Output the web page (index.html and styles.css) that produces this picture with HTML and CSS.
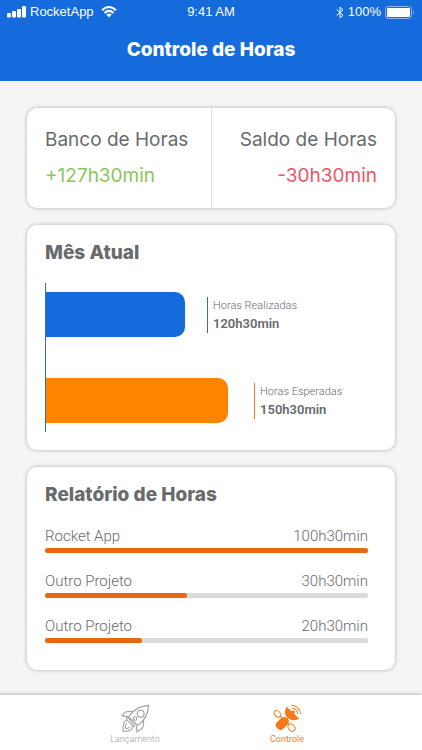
FILE: index.html
```html
<!DOCTYPE html>
<html lang="pt-BR">
<head>
<meta charset="utf-8">
<meta name="viewport" content="width=device-width, initial-scale=1">
<title>Controle de Horas</title>
<link rel="stylesheet" href="styles.css">
</head>
<body>
<div class="app">
  <header class="header">
    <div class="status">
      <div class="status-group">
        <svg class="signal" viewBox="0 0 19 12" aria-hidden="true"><rect x="0" y="7" width="4" height="4.500" rx="1"/><rect x="5" y="5" width="4" height="6.500" rx="1"/><rect x="10" y="3" width="4" height="8.500" rx="1"/><rect x="15" y="0" width="4" height="11.500" rx="1"/></svg>
        <span>RocketApp</span>
        <svg class="wifi" viewBox="0 0 16 12" aria-hidden="true"><path d="M1 4.300Q8-2.300 15 4.300M3.500 7Q8 2.800 12.500 7"/><path class="solid" d="M5.300 8.600Q8 6.200 10.700 8.600L8 11.400Z"/></svg>
      </div>
      <span>9:41 AM</span>
      <div class="status-group status-end">
        <svg class="bluetooth" viewBox="0 0 8 13" aria-hidden="true"><path d="M.7 3.500 7 9.300 4 12V1l3 2.700L.7 9.500"/></svg>
        <span>100%</span>
        <svg class="battery" viewBox="0 0 30 13" aria-hidden="true"><rect class="shell" x=".5" y=".5" width="26" height="12" rx="3"/><rect x="2" y="2" width="23" height="9" rx="1"/><path class="tip" d="M28 4.500Q30 6.500 28 8.500Z"/></svg>
      </div>
    </div>
    <h1 class="page-title">Controle de Horas</h1>
  </header>

  <main class="content">
    <section class="card summary">
      <div class="balance">
        <h2 class="balance-label">Banco de Horas</h2>
        <p class="balance-value positive">+127h30min</p>
      </div>
      <div class="balance balance-right">
        <h2 class="balance-label">Saldo de Horas</h2>
        <p class="balance-value negative">-30h30min</p>
      </div>
    </section>

    <section class="card month">
      <h2 class="card-title">Mês Atual</h2>
      <div class="chart">
        <div class="chart-row">
          <div class="bar bar-done"></div>
          <div class="legend legend-done"><span>Horas Realizadas</span><strong>120h30min</strong></div>
        </div>
        <div class="chart-row">
          <div class="bar bar-expected"></div>
          <div class="legend legend-expected"><span>Horas Esperadas</span><strong>150h30min</strong></div>
        </div>
      </div>
    </section>

    <section class="card report">
      <h2 class="card-title">Relatório de Horas</h2>
      <ul class="projects">
        <li><div class="project-text"><span>Rocket App</span><span>100h30min</span></div><div class="track"><div class="fill" style="width:100%"></div></div></li>
        <li><div class="project-text"><span>Outro Projeto</span><span>30h30min</span></div><div class="track"><div class="fill" style="width:44%"></div></div></li>
        <li><div class="project-text"><span>Outro Projeto</span><span>20h30min</span></div><div class="track"><div class="fill" style="width:30%"></div></div></li>
      </ul>
    </section>
  </main>

  <nav class="tabs">
    <a class="tab" href="#lancamento">
      <svg class="tab-icon rocket" viewBox="64 42 84 84" aria-hidden="true">
        <path d="M85 81Q103 49 144 46Q142 83 113 104L105 97L92 84Z"/>
        <circle cx="121" cy="70" r="10"/><circle cx="105" cy="84" r="5"/>
        <path d="M98 63 77 65 67 76 86 80M130 89 127 111 110 123 109 105M84 81 105 104M79 86 101 108M84 81 79 86M105 104 101 108"/>
        <path d="M80 89Q68 92 70 121Q96 123 98 108M80 98Q74 108 78 113Q86 114 90 108"/>
      </svg>
      <span>Lançamento</span>
    </a>
    <a class="tab active" href="#controle" aria-current="page">
      <svg class="tab-icon satellite" viewBox="68 42 86 86" aria-hidden="true">
        <path class="solid" d="M109 50Q98 65 108 80Q124 97 146 86Z"/>
        <circle class="solid" cx="128" cy="66" r="5"/>
        <path class="solid" d="M92 84Q102 76 111 85Q119 93 112 102L97 117Q88 122 80 114Q73 105 79 97Z"/>
        <path d="M126 68 120 74M124 53Q139 56 142 72M122 45Q147 48 150 72M88 78 97 87M109 98 117 104M105 90 114 81"/>
        <ellipse cx="81" cy="71" rx="8" ry="11" transform="rotate(-42 81 71)"/>
        <ellipse cx="123" cy="112" rx="9" ry="12" transform="rotate(-42 123 112)"/>
      </svg>
      <span>Controle</span>
    </a>
  </nav>
</div>
</body>
</html>
```
FILE: styles.css
```css
* { box-sizing: border-box; }

body {
  margin: 0;
  background: #f5f5f5;
  color: #696a6c;
  font-family: Inter, "Liberation Sans", sans-serif;
}

h1, h2, p, ul { margin: 0; padding: 0; }

.app {
  display: flex;
  flex-direction: column;
  min-height: 100vh;
}

.header {
  height: 81px;
  background: #156bdc;
  color: #fff;
}

.status {
  display: grid;
  grid-template-columns: 1fr auto 1fr;
  align-items: center;
  height: 24px;
  padding: 0 7px;
  font: 13px/24px "Liberation Sans", Arial, sans-serif;
}

.status-group { display: flex; align-items: center; gap: 4px; }
.status-end { justify-content: flex-end; }
.status svg { fill: #fff; }
.signal { width: 19px; height: 12px; }
.wifi { width: 16px; height: 12px; margin-left: 3px; }
.wifi path { fill: none; stroke: #fff; stroke-width: 2; }
.wifi .solid { fill: #fff; stroke: none; }
.bluetooth { width: 8px; height: 13px; }
.status .bluetooth path { fill: none; stroke: #fff; stroke-width: 1; }
.battery { width: 30px; height: 13px; }
.status .battery .shell { fill: none; stroke: #8db7ee; }
.battery .tip { fill: #8db7ee; }

.page-title {
  padding-top: 14px;
  text-align: center;
  font-size: 19px;
  line-height: 24px;
  font-weight: 800;
}

.content {
  display: flex;
  flex: 1;
  flex-direction: column;
  gap: 17px;
  padding: 27px 27px 24px;
}

.card {
  background: #fff;
  border-radius: 10px;
  box-shadow: 0 0 4px rgba(0, 0, 0, .28);
}

.summary { display: grid; grid-template-columns: 1fr 1fr; }
.balance { padding: 20px 18px; }
.balance-right { border-left: 1px solid #dedede; text-align: right; }
.balance-label, .balance-value {
  font-size: 19px;
  line-height: 24px;
  font-weight: 400;
  white-space: nowrap;
}
.balance-value { margin-top: 12px; }
.positive { color: #8bc65b; }
.negative { color: #ed5565; }

.card-title {
  font-size: 19px;
  line-height: 24px;
  font-weight: 800;
}

.month { padding: 16px 18px 18px; }
.chart {
  display: flex;
  flex-direction: column;
  gap: 41px;
  margin-top: 18px;
  padding: 9px 0;
  border-left: 1px solid #34729f;
}
.chart-row { display: flex; align-items: center; height: 45px; }
.bar { height: 45px; border-radius: 0 10px 10px 0; }
.bar-done { width: 42%; background: #156bdc; }
.bar-expected { width: 55%; background: #ff8500; }
.legend {
  display: flex;
  flex-direction: column;
  margin-left: 22px;
  padding-left: 5px;
  border-left: 1px solid #34729f;
  font-family: Roboto, sans-serif;
  font-size: 11px;
  line-height: 18px;
  white-space: nowrap;
}
.legend span { font-weight: 300; }
.legend strong { font-size: 13px; font-weight: 600; }
.legend-expected { margin-left: 26px; border-color: #f37a25; }

.report { padding: 16px 27px 27px 18px; }
.projects {
  display: flex;
  flex-direction: column;
  gap: 16px;
  margin-top: 17px;
  list-style: none;
}
.project-text {
  display: flex;
  justify-content: space-between;
  font: 300 15px/24px Roboto, sans-serif;
}
.track { height: 5px; border-radius: 3px; background: #dadbdd; }
.fill { height: 5px; border-radius: 3px; background: #eb670e; }

.tabs {
  display: grid;
  grid-template-columns: 1fr 1fr;
  height: 55px;
  padding: 0 59px;
  background: #fff;
  box-shadow: 0 0 4px rgba(0, 0, 0, .4);
}
.tab {
  display: flex;
  flex-direction: column;
  align-items: center;
  padding-top: 9px;
  color: #a0a0a0;
  font: 300 9px/12px Roboto, sans-serif;
  text-decoration: none;
}
.active { color: #f58220; font-weight: 400; }
.tab-icon {
  width: 29px;
  height: 29px;
  fill: none;
  stroke: #999;
  stroke-width: 3;
  stroke-linejoin: round;
}
.satellite { stroke: #f58220; stroke-width: 3; }
.satellite .solid { fill: #f57914; stroke: none; }
```
